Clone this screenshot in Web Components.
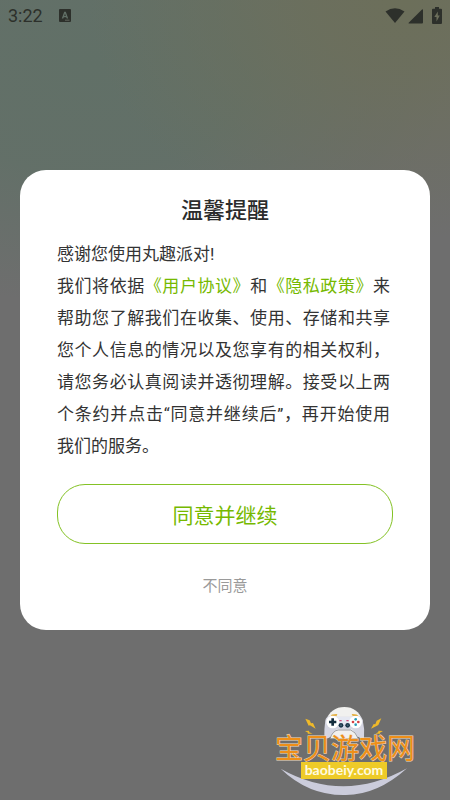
<!DOCTYPE html>
<html lang="zh-CN">
<head>
<meta charset="utf-8">
<meta name="viewport" content="width=device-width, initial-scale=1">
<title>温馨提醒</title>
<style>
  body { margin: 0; font-family: Roboto, "Noto Sans CJK SC", sans-serif; }
</style>
</head>
<body>
<app-screen>
  <status-bar slot="status" time="3:22"></status-bar>
  <consent-dialog>
    <span slot="title">温馨提醒</span>
    <consent-text></consent-text>
    <pill-button slot="actions">同意并继续</pill-button>
    <quiet-button slot="actions">不同意</quiet-button>
  </consent-dialog>
  <site-mark slot="mark"></site-mark>
</app-screen>

<script>
function define(name, markup, setup) {
  const template = document.createElement('template');
  template.innerHTML = markup;
  customElements.define(name, class extends HTMLElement {
    constructor() {
      super();
      this.attachShadow({ mode: 'open' }).append(template.content.cloneNode(true));
    }
    connectedCallback() { if (setup) setup(this); }
  });
}

define('app-screen', `
<style>
  :host {
    display: flex; flex-direction: column; position: relative; min-height: 100vh;
    background:
      radial-gradient(ellipse 70% 30% at 90% 0%, #6c6f5a 0%, #6c6f5acc 30%, #6c6f5a00 100%),
      radial-gradient(ellipse 80% 30% at 20% 8%, #617067 0%, #617067dd 45%, #61706700 100%),
      #6e6e6e;
  }
  main { flex: 1; display: flex; flex-direction: column; justify-content: center; padding: 0 20px 32px; }
  .mark { position: absolute; right: 32px; bottom: 0; }
</style>
<slot name="status"></slot>
<main><slot></slot></main>
<div class="mark"><slot name="mark"></slot></div>`);

define('status-bar', `
<style>
  :host { display: flex; align-items: center; height: 32px; padding: 0 8px; box-sizing: border-box; color: #2d302b; font: 18px/32px Roboto, sans-serif; }
  svg { display: block; fill: currentColor; }
  .app { margin-left: 16px; }
  .icons { margin-left: auto; display: flex; align-items: center; }
  .signal { margin-left: 3px; }
  .battery { margin-left: 9px; }
</style>
<span class="time"></span>
<svg class="app" width="12" height="14" viewBox="0 0 12 14" aria-hidden="true">
  <path fill-rule="evenodd" d="M1 0h10a1 1 0 0 1 1 1v11a1 1 0 0 1-1 1H1a1 1 0 0 1-1-1V1a1 1 0 0 1 1-1zM5.200 2.700 2.800 9.600H4.300L4.800 8.200H7.200L7.700 9.600H9.200L6.800 2.700zM6 4.500 6.800 7.100H5.200z"/>
  <path d="M6 11.200h4.500" stroke="#777d72" stroke-width=".7"/>
</svg>
<div class="icons">
  <svg width="20" height="16" viewBox="0 0 20 16" aria-hidden="true"><path d="M.5 3.500Q10-3 19.500 3.500L10 15z"/></svg>
  <svg class="signal" width="15" height="16" viewBox="0 0 15 16" aria-hidden="true"><path d="M14 1.500Q15 .8 15 2V14.500Q15 15.500 14 15.500H1Q0 15.500.7 14.700z"/></svg>
  <svg class="battery" width="10" height="18" viewBox="0 0 10 18" aria-hidden="true"><path fill-rule="evenodd" d="M3 0h4v1.800h2q1 0 1 1V16q0 1-1 1H1q-1 0-1-1V2.800q0-1 1-1h2zM5.800 4.500 2.300 10H4.500V14.500L7.800 8.500H5.800z"/></svg>
</div>`, el => {
  el.shadowRoot.querySelector('.time').textContent = el.getAttribute('time');
});

define('consent-dialog', `
<style>
  :host { display: block; }
  section { background: #fff; border-radius: 26px; padding: 24px 37px 30px; }
  h1 { margin: 0 0 10px; color: #2c2c2c; font-size: 22px; font-weight: 500; line-height: 34px; text-align: center; }
  .actions { display: flex; flex-direction: column; gap: 24px; margin-top: 22px; }
</style>
<section role="dialog" aria-labelledby="title">
  <h1 id="title"><slot name="title"></slot></h1>
  <slot></slot>
  <div class="actions"><slot name="actions"></slot></div>
</section>`);

define('consent-text', `
<style>
  :host { display: block; padding-right: 3px; color: #333; font-size: 17px; line-height: 32px; text-spacing-trim: space-all; }
  p { margin: 0; text-align: justify; }
  a { color: #76b900; text-decoration: none; }
</style>
<p>感谢您使用丸趣派对!</p>
<p>我们将依据<a href="#agreement">《用户协议》</a>和<a href="#privacy">《隐私政策》</a><span>来</span>帮助您了解我们在收集、使用、存储和共享您个人信息的情况以及您享有的相关权利，请您务必认真阅读并透彻理解。接受以上两个条约并点击“同意并继续后”，再开始使用<wbr>我们的服务。</p>`);

define('pill-button', `
<style>
  :host { display: block; }
  button { display: block; width: 100%; height: 60px; padding: 0; border: 1px solid #84c225; border-radius: 28px; background: none; color: #76b900; font: inherit; font-size: 21px; }
</style>
<button type="button"><slot></slot></button>`);

define('quiet-button', `
<style>
  :host { display: flex; justify-content: center; }
  button { padding: 0 16px; height: 32px; border: 0; background: none; color: #9a9a9a; font: inherit; font-size: 15px; }
</style>
<button type="button"><slot></slot></button>`);

define('site-mark', `
<style>
  :host { display: block; }
  svg { display: block; }
  .name { font: 400 28px "Noto Sans CJK SC", sans-serif; fill: #ee8f18; stroke: #eed9bd; stroke-width: 1; paint-order: stroke; }
  .url { font: 700 14px Lato, sans-serif; fill: #fffbe0; }
</style>
<svg width="145" height="100" viewBox="0 0 145 100" role="img" aria-label="宝贝游戏网 baobeiy.com">
  <g transform="translate(-8) scale(.33333)">
    <path d="M47 206Q235 312 426 205Q335 287 238 285Q130 286 47 206z" fill="#cbccdb"/>
    <path d="M182 62Q198 21 238 21Q278 21 293 62V110H184z" fill="#f1f1ef"/>
    <path d="M182 57Q190 45 207 48L218 50H256L270 48Q288 45 293 60Q300 88 297 114Q282 120 271 99L261 88H216L205 99Q194 120 179 114Q176 91 182 57z" fill="#d5d6e2"/>
    <path d="M218 51H258V73H218z" fill="#e5e8f2"/>
    <path d="M195 116Q203 92 220 90H257Q271 94 280 116z" fill="#f2f1ee" stroke="#75777f" stroke-width="2"/>
    <circle cx="203" cy="66" r="19" fill="#fff"/><circle cx="272" cy="66" r="19" fill="#fff"/>
    <path d="M197 47Q199 41 217 42L215 48zM260 42Q277 41 280 48H263z" fill="#e4b147"/>
    <path d="M199 55h8v7h7v8h-7v7h-8v-7h-7v-8h7z" fill="#152d3e"/>
    <circle cx="228" cy="76" r="7" fill="#173246"/><circle cx="248" cy="76" r="7" fill="#173246"/>
    <circle cx="228" cy="76" r="3" fill="#406172"/><circle cx="248" cy="76" r="3" fill="#406172"/>
    <path d="M223 60h7v4h-7zM244 60h7v4h-7z" fill="#cf527d"/>
    <circle cx="272" cy="58" r="4" fill="#299bb8"/><circle cx="272" cy="74" r="4" fill="#299bb8"/>
    <circle cx="264" cy="66" r="4" fill="#d33f43"/><circle cx="280" cy="66" r="4" fill="#d33f43"/>
    <g fill="#efb929">
      <path d="M121 56 134 61 138 70 144 69 152 86 135 76 131 77zM120 93 132 92 133 97 143 101 128 101 129 98z"/>
      <path d="M349 55 335 62 331 73 326 72 318 86 336 77 340 75zM354 93 341 92 339 97 331 101 345 101 345 98z"/>
    </g>
  </g>
  <text class="name" x="2" y="59">宝贝游戏网</text>
  <rect x="28" y="62" width="86" height="17" fill="#eecb28"/>
  <text class="url" x="71" y="75" text-anchor="middle">baobeiy.com</text>
</svg>`);
</script>
</body>
</html>
